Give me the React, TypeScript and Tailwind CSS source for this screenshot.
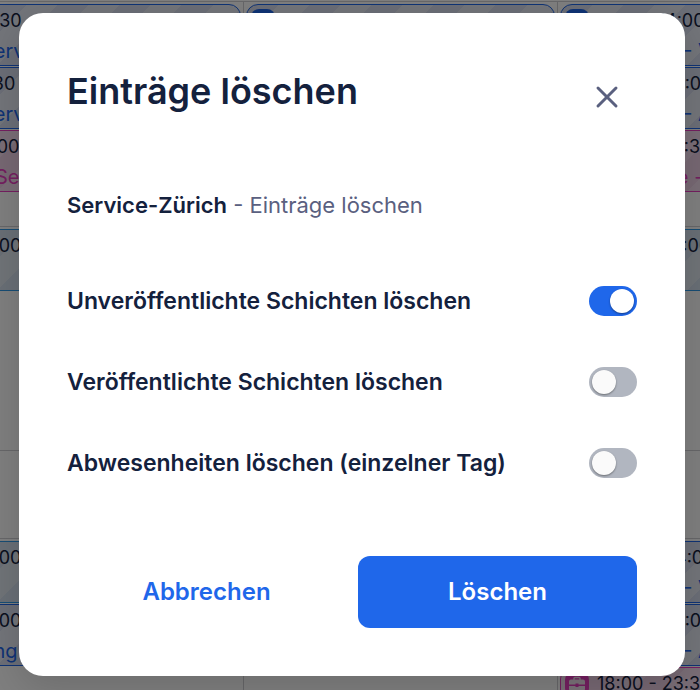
import { useState } from "react";
import { X } from "lucide-react";

type Tone = "blue" | "pink" | "sky";
type Shift = { time: string; place?: string; tone: Tone; timeInset?: string; placeInset?: string };
type Day = { morning: Shift[]; noon: Shift[]; evening: Shift[] };

const tones: Record<Tone, { card: string; text: string; badge: string }> = {
  blue: {
    card: "border-[#1f67ea] bg-[repeating-linear-gradient(135deg,#d6dcee_0px,#d6dcee_22px,#e6eaf4_22px,#e6eaf4_44px)]",
    text: "text-[#1f67ea]",
    badge: "bg-[#1f67ea]",
  },
  pink: {
    card: "border-[#e83fc0] bg-[repeating-linear-gradient(135deg,#f5dcee_0px,#f5dcee_22px,#efd0e6_22px,#efd0e6_44px)]",
    text: "text-[#e83fc0]",
    badge: "bg-[#e83fc0]",
  },
  sky: {
    card: "border-[#2f9be8] bg-[repeating-linear-gradient(135deg,#d2dfec_0px,#d2dfec_22px,#e0e8f0_22px,#e0e8f0_44px)]",
    text: "text-[#1f67ea]",
    badge: "bg-[#2f9be8]",
  },
};

const days: Day[] = [
  {
    morning: [
      { time: "14:30", place: "Service - V", tone: "blue", timeInset: "pl-[14px]", placeInset: "pl-[44px]" },
      { time: "11:30", place: "Service - A", tone: "blue", timeInset: "pl-3", placeInset: "pl-[44px]" },
      { time: "18:00", place: "Service -", tone: "pink", timeInset: "pl-3", placeInset: "pl-[58px]" },
    ],
    noon: [{ time: "18:00", tone: "sky", timeInset: "pl-[14px]" }],
    evening: [
      { time: "18:00", tone: "sky", timeInset: "pl-[14px]" },
      { time: "18:00", place: "Planung", tone: "blue", timeInset: "pl-[14px]", placeInset: "pl-1" },
    ],
  },
  {
    morning: [{ time: "11:30 - 14:00", place: "Service - V", tone: "blue" }],
    noon: [],
    evening: [],
  },
  {
    morning: [
      { time: "11:30 - 14:00", place: "Service - V", tone: "blue", timeInset: "pl-2" },
      { time: "11:30 - 14:00", place: "Service - A", tone: "blue", timeInset: "pl-4" },
      { time: "18:00 - 23:30", place: "Service -", tone: "pink", placeInset: "pl-[52px]" },
    ],
    noon: [{ time: "07:00 - 16:00", tone: "sky" }],
    evening: [
      { time: "11:30 - 14:00", place: "Service - V", tone: "blue", timeInset: "pl-[18px]" },
      { time: "11:30 - 14:00", place: "Service - A", tone: "blue", timeInset: "pl-4" },
      { time: "18:00 - 23:30", place: "Service -", tone: "pink", placeInset: "pl-[52px]" },
    ],
  },
];

function BriefcaseIcon() {
  return (
    <svg viewBox="0 0 16 16" className="size-4" fill="none">
      <path d="M5 4V2.500a1 1 0 0 1 1-1h4a1 1 0 0 1 1 1V4" stroke="currentColor" strokeWidth="1.5" />
      <path
        d="M2 3.500h12a2 2 0 0 1 2 2V8.500H9.500V7.500H6.500V8.500H0V5.500A2 2 0 0 1 2 3.500ZM0 10H6.500v1h3v-1H16V13a1.500 1.500 0 0 1-1.500 1.500H1.500A1.500 1.500 0 0 1 0 13Z"
        fill="currentColor"
      />
    </svg>
  );
}

function ShiftCard({ shift }: { shift: Shift }) {
  const tone = tones[shift.tone];
  return (
    <div className={`h-[62px] overflow-hidden rounded-xl border pl-1 whitespace-nowrap ${tone.card}`}>
      <div className="flex h-8 items-center">
        <span className={`grid size-6 shrink-0 place-items-center rounded-lg text-[#f6e6f2] ${tone.badge}`}>
          <BriefcaseIcon />
        </span>
        <span className={`text-lg text-[#14213d] ${shift.timeInset ?? "pl-2"}`}>{shift.time}</span>
      </div>
      <div className={`text-xl leading-[28px] ${tone.text} ${shift.placeInset ?? "pl-[41px]"}`}>{shift.place}</div>
    </div>
  );
}

function Slot({ shifts, height }: { shifts: Shift[]; height: string }) {
  return (
    <div className={`flex flex-col gap-px border-t border-[#cfcfd2] px-[2px] pt-[2px] ${height}`}>
      {shifts.map((shift, i) => (
        <ShiftCard key={i} shift={shift} />
      ))}
    </div>
  );
}

function Schedule() {
  return (
    <div aria-hidden="true" className="absolute inset-0 overflow-hidden bg-white pt-px">
      <div className="-ml-[70px] grid w-[942px] grid-cols-3">
        {days.map((day, i) => (
          <div key={i} className="border-r border-[#cfcfd2]">
            <Slot shifts={day.morning} height="h-[225px]" />
            <Slot shifts={day.noon} height="h-[224px]" />
            <Slot shifts={[]} height="h-[88px]" />
            <Slot shifts={day.evening} height="h-[240px]" />
          </div>
        ))}
      </div>
    </div>
  );
}

function ToggleRow({ label, defaultOn = false }: { label: string; defaultOn?: boolean }) {
  const [on, setOn] = useState(defaultOn);
  return (
    <label className="flex h-[30px] items-center justify-between gap-4 text-[23px] font-semibold text-[#14213d]">
      {label}
      <input
        type="checkbox"
        role="switch"
        checked={on}
        onChange={(e) => setOn(e.target.checked)}
        className="flex h-[30px] w-12 shrink-0 cursor-pointer appearance-none items-center rounded-full bg-[#b1b6c0] px-[3px] before:size-6 before:rounded-full before:bg-[#fafafa] before:shadow-[0_1px_2px_rgba(0,0,0,0.4)] checked:justify-end checked:bg-[#1f67ea] checked:before:bg-white"
      />
    </label>
  );
}

export default function App() {
  return (
    <div className="relative min-h-screen overflow-hidden font-['Inter','Liberation_Sans',sans-serif]">
      <Schedule />
      <div className="relative min-h-screen bg-black/50 pt-[13px] pr-[15px] pb-[14px] pl-[19px]">
        <div
          role="dialog"
          aria-modal="true"
          aria-labelledby="dialog-title"
          className="rounded-3xl bg-white px-12 pt-[54px] pb-12 shadow-[0_12px_40px_rgba(0,0,0,0.15)]"
        >
          <div className="flex items-start justify-between">
            <h1 id="dialog-title" className="text-4xl leading-[48px] font-semibold text-[#14213d]">
              Einträge löschen
            </h1>
            <button type="button" aria-label="Schliessen" className="grid size-[60px] cursor-pointer place-items-center text-[#5a607f]">
              <X size={36} strokeWidth={2} />
            </button>
          </div>
          <p className="mt-[62px] text-[22px] leading-8 text-[#5a607f]">
            <strong className="font-semibold text-[#14213d]">Service-Zürich</strong> - Einträge löschen
          </p>
          <div className="mt-[65px] flex flex-col gap-[51px]">
            <ToggleRow label="Unveröffentlichte Schichten löschen" defaultOn />
            <ToggleRow label="Veröffentlichte Schichten löschen" />
            <ToggleRow label="Abwesenheiten löschen (einzelner Tag)" />
          </div>
          <div className="mt-[78px] flex gap-3 text-2xl font-semibold">
            <button type="button" className="h-[72px] flex-1 cursor-pointer rounded-xl text-[#1f67ea]">
              Abbrechen
            </button>
            <button type="button" className="h-[72px] flex-1 cursor-pointer rounded-xl bg-[#1f67ea] text-white">
              Löschen
            </button>
          </div>
        </div>
      </div>
    </div>
  );
}
